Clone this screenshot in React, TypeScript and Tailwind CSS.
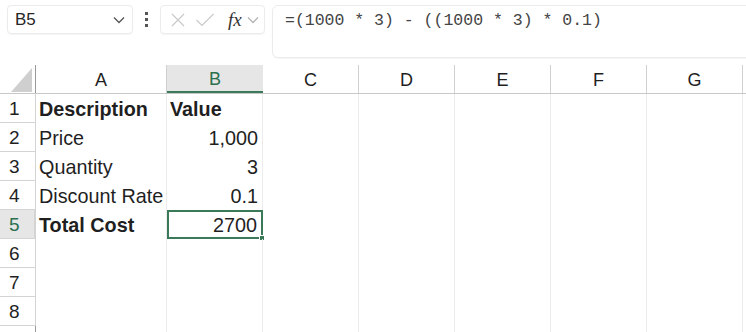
import React from 'react'

const cols = ['A', 'B', 'C', 'D', 'E', 'F', 'G']
const widths = ['w-[131px]', 'w-[96px]', 'w-[96px]', 'w-[96px]', 'w-[96px]', 'w-[96px]', 'w-[96px]']

type Cell = { text: string; bold?: boolean; right?: boolean }

const rows: Cell[][] = [
  [{ text: 'Description', bold: true }, { text: 'Value', bold: true }],
  [{ text: 'Price' }, { text: '1,000', right: true }],
  [{ text: 'Quantity' }, { text: '3', right: true }],
  [{ text: 'Discount Rate' }, { text: '0.1', right: true }],
  [{ text: 'Total Cost', bold: true }, { text: '2700', right: true }],
  [],
  [],
  [],
]

const GREEN = 'border-[#3b7a58]'

function Chevron({ className }: { className?: string }) {
  return (
    <svg className={className} width="12" height="8" viewBox="0 0 12 8" fill="none">
      <path d="M1 1.5 L6 6.5 L11 1.5" stroke="currentColor" strokeWidth="1.3" />
    </svg>
  )
}

export default function App() {
  return (
    <div className="w-[746px] h-[332px] bg-white overflow-hidden font-['Liberation_Sans',Arial,sans-serif] text-[#1f1f1f]">
      {/* Toolbar */}
      <div className="flex items-start h-[65px] pt-[5px] pl-[7px]">
        <div className="flex items-center justify-between w-[126px] h-[29px] border border-[#ebebeb] rounded-[4px] pl-[7px] pr-[7px] shadow-[0_1px_1px_rgba(0,0,0,0.04)]">
          <span className="text-[17px] text-[#262626]">B5</span>
          <Chevron className="text-[#555]" />
        </div>
        <div className="flex flex-col items-center justify-center gap-[3px] w-[27px] h-[29px]">
          <span className="w-[3px] h-[3px] bg-[#555]" />
          <span className="w-[3px] h-[3px] bg-[#555]" />
          <span className="w-[3px] h-[3px] bg-[#555]" />
        </div>
        <div className="flex items-center w-[105px] h-[29px] border border-[#ebebeb] rounded-[4px] pl-[9px] shadow-[0_1px_1px_rgba(0,0,0,0.04)]">
          <svg width="16" height="16" viewBox="0 0 16 16" className="text-[#c9c9c9]">
            <path d="M2 2 L14 14 M14 2 L2 14" stroke="currentColor" strokeWidth="1.2" />
          </svg>
          <svg width="20" height="16" viewBox="0 0 20 16" className="ml-[9px] text-[#c9c9c9]">
            <path d="M1.5 8 L7 13.5 L18.5 2" stroke="currentColor" strokeWidth="1.2" fill="none" />
          </svg>
          <span className="ml-[13px] text-[19px] italic font-['Liberation_Serif',serif] text-[#333] leading-none">fx</span>
          <Chevron className="ml-[5px] text-[#b5b5b5]" />
        </div>
        <div className="ml-[7px] flex-1 -mr-[20px] h-[53px] border border-[#ebebeb] rounded-[6px] pl-[12px] pt-[2px] shadow-[0_1px_1px_rgba(0,0,0,0.04)]">
          <span className="font-['Liberation_Mono',monospace] text-[16.5px] text-[#444]">=(1000 * 3) - ((1000 * 3) * 0.1)</span>
        </div>
      </div>

      {/* Column headers */}
      <div className="flex h-[29px] border-b border-[#c8c8c8]">
        <div className="w-[36px] h-full flex items-end justify-end pr-[3px] pb-[1px] border-r border-[#9a9a9a]">
          <svg width="21" height="24" viewBox="0 0 21 24">
            <polygon points="21,0 21,24 0,24" fill="#cfcfcf" />
          </svg>
        </div>
        {cols.map((c, i) => (
          <div
            key={c}
            className={`${widths[i]} h-full flex items-center justify-center text-[18px] pt-[3px] ${
              c === 'B'
                ? `bg-[#e6e6e6] text-[#2c7050] border-b-2 ${GREEN}`
                : 'border-r border-[#d0d0d0]'
            }`}
          >
            {c}
          </div>
        ))}
        <div className="flex-1" />
      </div>

      {/* Rows */}
      {rows.map((row, r) => {
        const n = r + 1
        const sel = n === 5
        return (
          <div key={n} className="flex h-[29px]">
            <div
              className={`w-[36px] h-full flex items-center pl-[9px] pt-[3px] text-[19px] border-b border-[#d4d4d4] ${
                sel ? `bg-[#e6e6e6] text-[#2c7050] border-r-2 ${GREEN}` : 'border-r border-[#9a9a9a]'
              }`}
            >
              {n}
            </div>
            {cols.map((c, i) => {
              const cell = row[i]
              const isSel = sel && c === 'B'
              return (
                <div
                  key={c}
                  className={`${widths[i]} h-full relative flex items-center pt-[3px] text-[19.8px] ${
                    cell?.right ? 'justify-end pr-[4px]' : 'pl-[3px]'
                  } ${cell?.bold ? 'font-bold' : ''} ${
                    isSel ? `border-2 ${GREEN} pr-[2px] pt-[1px]` : 'border-r border-[#ececec]'
                  }`}
                >
                  {cell?.text}
                  {isSel && (
                    <span className="absolute -right-[4px] -bottom-[4px] w-[6px] h-[6px] bg-[#3b7a58] border border-white" />
                  )}
                </div>
              )
            })}
            <div className="flex-1" />
          </div>
        )
      })}

      {/* Partial row below */}
      <div className="flex h-[6px]">
        <div className="w-[36px] h-full border-r border-[#9a9a9a]" />
        {cols.map((c, i) => (
          <div key={c} className={`${widths[i]} h-full border-r border-[#ececec]`} />
        ))}
      </div>
    </div>
  )
}
